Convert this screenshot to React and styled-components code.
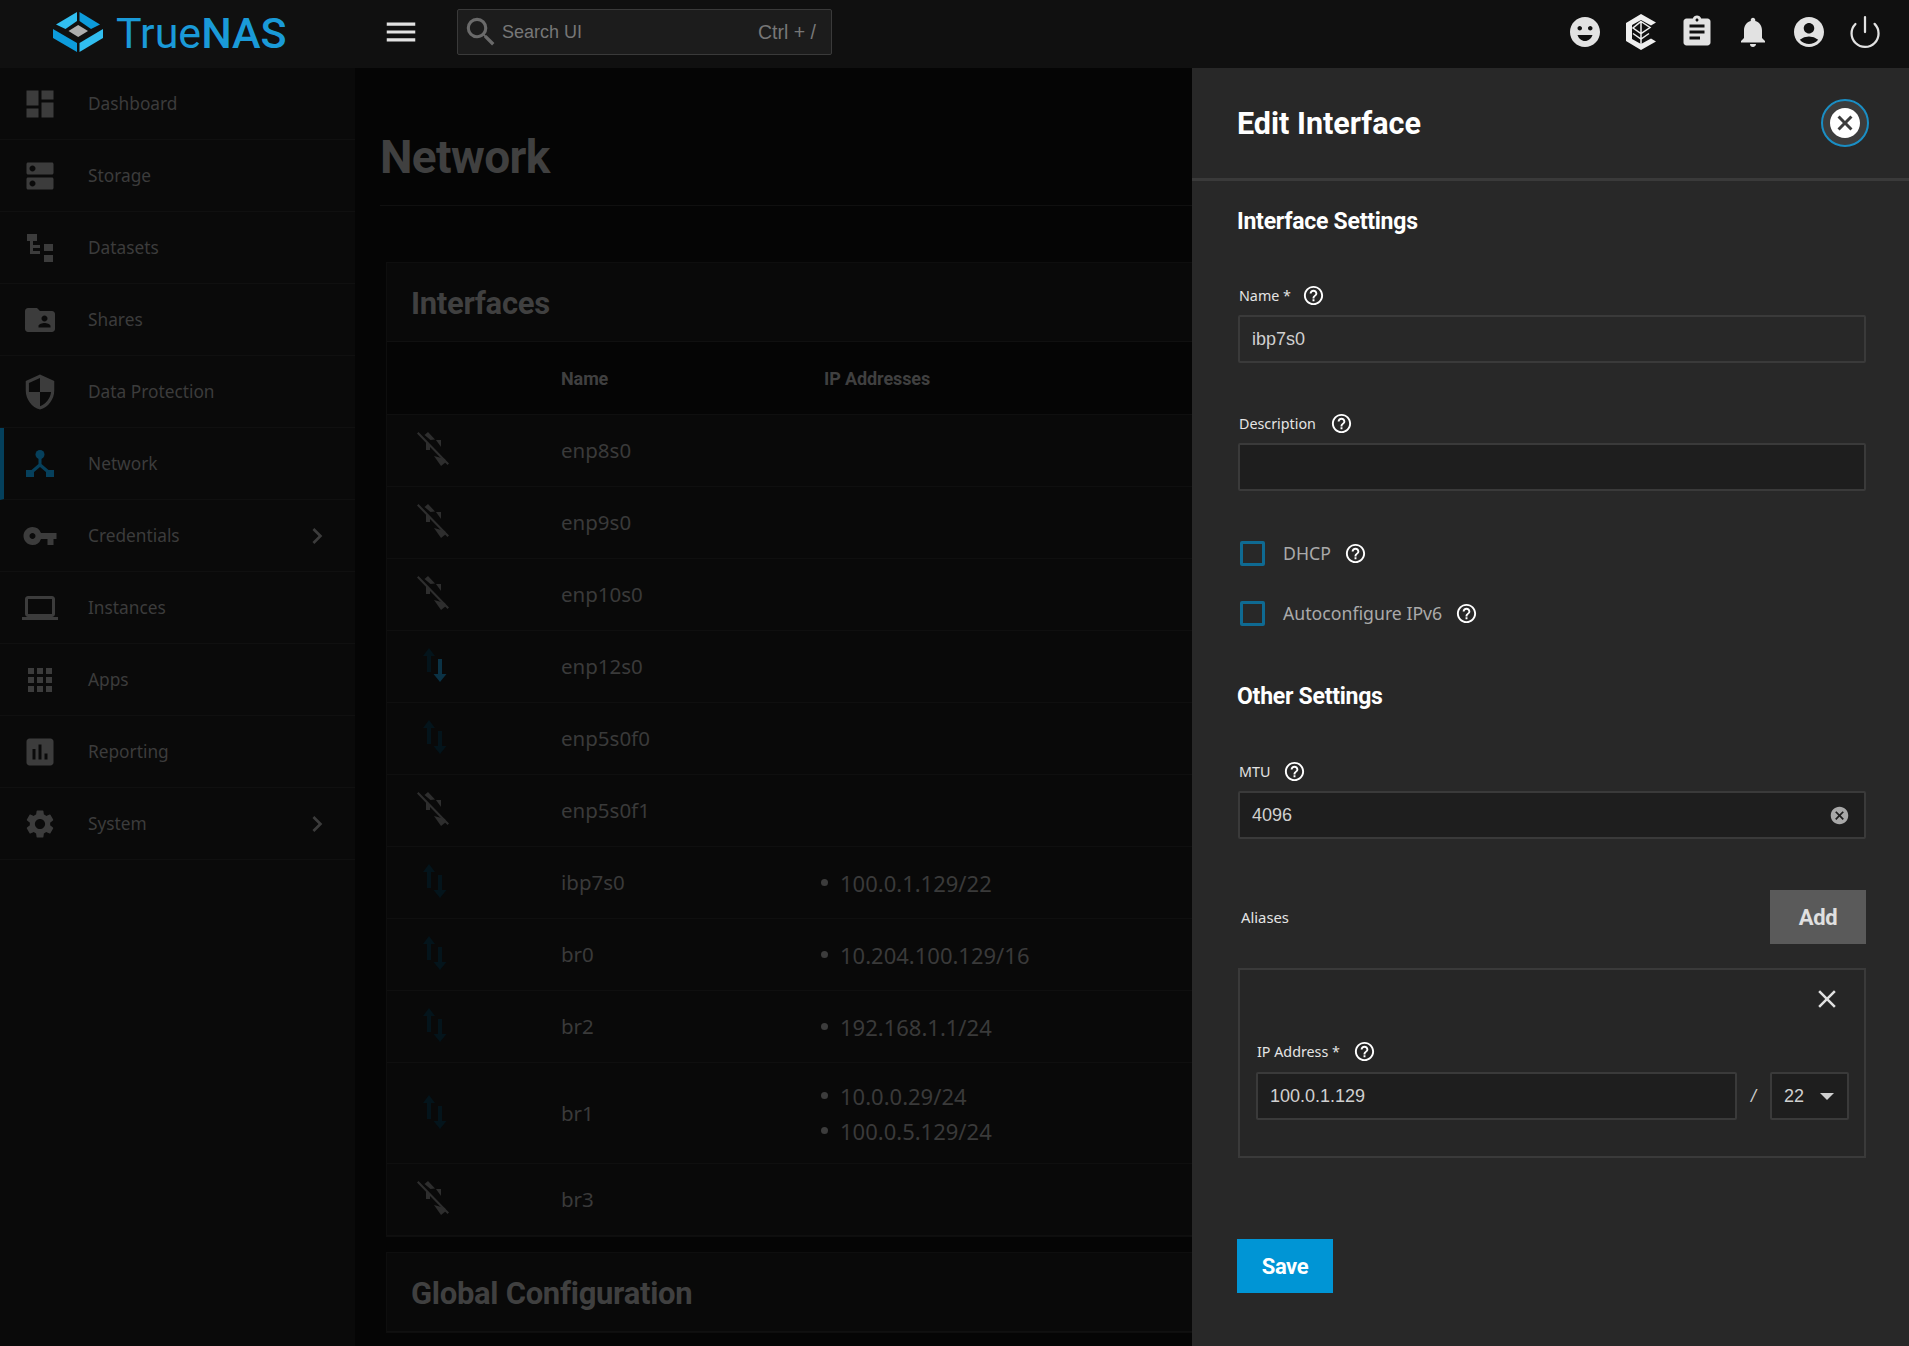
import React from 'react';
import styled, { createGlobalStyle } from 'styled-components';
import {
	MdDashboard,
	MdDns,
	MdFolderShared,
	MdSecurity,
	MdVpnKey,
	MdLaptop,
	MdApps,
	MdAssessment,
	MdSettings,
	MdChevronRight,
	MdMenu,
	MdSearch,
	MdEmojiEmotions,
	MdAssignment,
	MdNotifications,
	MdAccountCircle,
	MdCancel,
	MdClose,
	MdHelpOutline,
} from 'react-icons/md';
import { Power } from 'lucide-react';

const HEADING = '"Roboto", "Liberation Sans", sans-serif';
const BODY = '"Noto Sans", "Liberation Sans", sans-serif';
const FIELD = '"Liberation Sans", Arial, sans-serif';

const GlobalStyle = createGlobalStyle`
	html, body {
		margin: 0;
		padding: 0;
		height: 100%;
		background: #050505;
	}
	* {
		box-sizing: border-box;
	}
`;

const Page = styled.div`
	display: flex;
	flex-direction: column;
	width: 100vw;
	height: 100vh;
	overflow: hidden;
`;

const Topbar = styled.header`
	display: flex;
	align-items: center;
	flex: 0 0 68px;
	background: #101010;
	padding: 0 26px 4px 0;
`;

const LogoBox = styled.div`
	display: flex;
	align-items: center;
	width: 370px;
	padding-left: 53px;
	gap: 13px;
`;

const LogoText = styled.span`
	margin-top: 2px;
	font-family: ${HEADING};
	font-size: 43px;
	line-height: 1;
	color: #1a9ad8;
	& b {
		font-weight: 500;
	}
`;

const MenuButton = styled.div`
	display: flex;
	width: 64px;
	color: #e2e2e2;
	padding-left: 12px;
`;

const SearchBox = styled.div`
	display: flex;
	align-items: center;
	width: 375px;
	height: 46px;
	margin-left: 23px;
	padding: 0 15px 0 4px;
	background: #1c1c1c;
	border: 1px solid #3a3a3a;
	border-radius: 2px;
	font-family: ${FIELD};
	font-size: 18px;
	color: #777;
`;

const SearchText = styled.span`
	flex: 1;
	margin-left: 2px;
`;

const SearchHint = styled.span`
	font-size: 19.5px;
`;

const TopIcons = styled.div`
	display: flex;
	align-items: center;
	margin-left: auto;
	gap: 20px;
	color: #e2e2e2;
`;

const TopIcon = styled.div`
	display: flex;
	align-items: center;
	justify-content: center;
	width: 36px;
	height: 36px;
`;

const Body = styled.div`
	display: flex;
	flex: 1;
	min-height: 0;
`;

const Sidebar = styled.nav`
	flex: 0 0 355px;
	background: #0a0a0a;
`;

const NavItem = styled.div`
	display: flex;
	align-items: center;
	height: 72px;
	padding-left: ${(p) => (p.$active ? '21px' : '25px')};
	border-bottom: 1px solid #101010;
	border-left: ${(p) => (p.$active ? '4px solid #04405c' : 'none')};
	font-family: ${BODY};
	font-size: 17.3px;
	color: #3c3c3c;
`;

const NavIcon = styled.div`
	display: flex;
	justify-content: center;
	flex: 0 0 30px;
	min-width: 0;
	margin-right: 33px;
	color: ${(p) => (p.$active ? '#06405c' : '#3c3c3c')};
	& svg {
		flex: none;
	}
`;

const NavArrow = styled.div`
	display: flex;
	margin-left: auto;
	margin-right: 22px;
`;

const Main = styled.main`
	flex: 1;
	min-width: 0;
	overflow: hidden;
	padding-left: 25px;
`;

const PageTitle = styled.h1`
	display: flex;
	align-items: center;
	height: 138px;
	margin: 0 0 56px;
	padding-top: 40px;
	border-bottom: 1px solid #101010;
	font-family: ${HEADING};
	font-size: 46px;
	font-weight: 700;
	letter-spacing: -0.6px;
	color: #404040;
`;

const Card = styled.section`
	width: 1000px;
	margin-left: 6px;
	margin-bottom: 15px;
	background: #090909;
	border: 1px solid #0e0e0e;
`;

const CardTitle = styled.h2`
	display: flex;
	align-items: center;
	height: 79px;
	margin: 0;
	padding: 2px 0 0 24px;
	border-bottom: 1px solid #101010;
	font-family: ${HEADING};
	font-size: 31px;
	font-weight: 700;
	letter-spacing: -0.3px;
	color: #404040;
`;

const Row = styled.div`
	display: grid;
	grid-template-columns: 174px 263px 1fr;
	align-items: center;
	min-height: ${(p) => (p.$head ? '73px' : '72px')};
	border-bottom: 1px solid #0f0f0f;
	background: ${(p) => (p.$head ? '#050505' : 'transparent')};
	font-family: ${BODY};
	font-size: 20.5px;
	color: #3a3a3a;
`;

const HeadCell = styled.div`
	font-family: ${HEADING};
	font-size: 18px;
	font-weight: 700;
	letter-spacing: -0.1px;
	color: #404040;
`;

const NameCell = styled.div`
	padding-bottom: 1px;
`;

const StatusCell = styled.div`
	display: flex;
	padding: 0 0 3px 30px;
`;

const AddressList = styled.ul`
	margin: 0;
	padding: 15px 0 15px;
	list-style: none;
`;

const Address = styled.li`
	display: flex;
	align-items: center;
	height: 35px;
	gap: 12px;
	margin-left: -3px;
	font-size: 22px;
	&::before {
		content: '';
		width: 7px;
		height: 7px;
		border-radius: 50%;
		background: #3c3c3c;
	}
`;

const Panel = styled.aside`
	flex: 0 0 717px;
	padding: 0 43px 0 46px;
	background: #282828;
`;

const PanelHeader = styled.div`
	display: flex;
	align-items: center;
	justify-content: space-between;
	height: 113px;
	margin: 0 -43px 0 -46px;
	padding: 0 40px 0 45px;
	border-bottom: 3px solid #3a3a3a;
`;

const PanelTitle = styled.h2`
	margin: 0;
	font-family: ${HEADING};
	font-size: 30.5px;
	font-weight: 700;
	color: #fff;
`;

const CloseRing = styled.div`
	display: flex;
	align-items: center;
	justify-content: center;
	width: 48px;
	height: 48px;
	border: 2px solid #1a8ec4;
	border-radius: 50%;
	background: #3c3c3c;
	color: #fff;
	& svg {
		flex: none;
	}
`;

const SectionTitle = styled.h3`
	height: 30px;
	margin: ${(p) => p.$top} 0 0 -1px;
	font-family: ${HEADING};
	font-size: 23px;
	font-weight: 700;
	line-height: 30px;
	letter-spacing: -0.25px;
	color: #fff;
`;

const Field = styled.div`
	margin-top: ${(p) => p.$top || '48px'};
`;

const Label = styled.div`
	display: flex;
	align-items: center;
	height: 24px;
	margin-bottom: 8px;
	padding-left: 1px;
	gap: ${(p) => p.$gap || '13px'};
	font-family: ${BODY};
	font-size: 14.3px;
	color: #e4e4e4;
`;

const HelpIcon = styled(MdHelpOutline)`
	flex: none;
	font-size: 23px;
	color: #fff;
`;

const Input = styled.div`
	display: flex;
	align-items: center;
	flex: ${(p) => (p.$grow ? '1' : 'none')};
	height: 48px;
	padding: 0 14px 0 12px;
	background: ${(p) => (p.$disabled ? '#282828' : '#1e1e1e')};
	border: 2px solid #3a3a3a;
	border-radius: 2px;
	font-family: ${FIELD};
	font-size: 18px;
	color: #d0d0d0;
`;

const ClearIcon = styled(MdCancel)`
	margin-left: auto;
	font-size: 21px;
	color: #a8a8a8;
`;

const CheckRow = styled.div`
	display: flex;
	align-items: center;
	height: 30px;
	margin-top: ${(p) => p.$top};
	padding-left: 2px;
	font-family: ${BODY};
	font-size: 17.7px;
	color: #aaa;
`;

const CheckBox = styled.span`
	width: 25px;
	height: 25px;
	margin-right: 18px;
	border: 3px solid #0f6a92;
	border-radius: 2px;
`;

const CheckHelp = styled.span`
	display: flex;
	margin-left: 13px;
`;

const AliasRow = styled.div`
	display: flex;
	align-items: center;
	justify-content: space-between;
	margin-top: 51px;
	padding-left: 3px;
	font-family: ${BODY};
	font-size: 14.8px;
	color: #e4e4e4;
`;

const ActionButton = styled.div`
	display: flex;
	align-items: center;
	justify-content: center;
	width: 96px;
	height: 54px;
	padding-top: 1px;
	background: ${(p) => (p.$primary ? '#0095d5' : '#5a5a5a')};
	font-family: ${HEADING};
	font-size: 22px;
	font-weight: 700;
	letter-spacing: -0.4px;
	color: ${(p) => (p.$primary ? '#fff' : '#e0e0e0')};
`;

const AliasBox = styled.div`
	height: 190px;
	margin-top: 24px;
	padding: 14px 15px 0 16px;
	background: #262626;
	border: 2px solid #3a3a3a;
`;

const AliasRemove = styled.div`
	display: flex;
	justify-content: flex-end;
	margin-right: 7px;
	color: #e2e2e2;
`;

const AliasField = styled.div`
	margin-top: 25px;
`;

const AddressRow = styled.div`
	display: flex;
	align-items: center;
	margin-top: 9px;
`;

const Slash = styled.span`
	width: 33px;
	text-align: center;
	font-family: ${FIELD};
	font-size: 18px;
	font-style: italic;
	color: #ccc;
`;

const Select = styled(Input)`
	width: 79px;
	padding-right: 0;
`;

const Caret = styled.span`
	width: 0;
	height: 0;
	margin-left: 16px;
	border-left: 7px solid transparent;
	border-right: 7px solid transparent;
	border-top: 7px solid #d0d0d0;
`;

const SaveBar = styled.div`
	margin: 81px 0 0 -1px;
`;

const LogoMark = () => (
	<svg width="50" height="40" viewBox="0 0 50 40">
		<polygon points="3,12.5 24,0 24,9 12.5,17" fill="#31bef0" />
		<polygon points="47,12.5 26.5,0 26.5,9 38,17" fill="#0d9bdb" />
		<polygon points="0,17 24,31 24,40 0,26" fill="#0d9bdb" />
		<polygon points="50,17 26.5,31 26.5,40 50,26" fill="#31bef0" />
		<polygon points="25.2,13 35,19 25.2,25 15.5,19" fill="#aeaeae" />
	</svg>
);

const BoxLogo = () => (
	<svg width="32" height="36" viewBox="0 0 32 36">
		<path d="M16 0 L31 8.5 L26 11.5 L16 6 L7 11 L7 25 L16 30 L26 24.5 L31 27.5 L16 36 L1 27 L1 9 Z" fill="#efefef" />
		<path
			d="M16 7.5 L25 13.5 L16 19.5 L8 14 Z M16 7.5 V30 M8 19.5 L16 25 L24 19.5"
			fill="none"
			stroke="#efefef"
			strokeWidth="1.5"
		/>
	</svg>
);

const DatasetIcon = () => (
	<svg width="30" height="30" viewBox="0 0 30 30" fill="currentColor">
		<rect x="2" y="1" width="10" height="7" />
		<path d="M5 8h3v10h7v3H5z" />
		<path d="M8 12h7v3H8z" />
		<rect x="19" y="11" width="9" height="7" />
		<rect x="19" y="22" width="9" height="7" />
	</svg>
);

const NetworkIcon = () => (
	<svg width="30" height="30" viewBox="0 0 30 30" fill="currentColor">
		<circle cx="15" cy="5.5" r="4.5" />
		<path d="M13.5 8h3v7l7 6-2 2.4-6.5-5.4-6.5 5.4-2-2.4 7-6z" />
		<rect x="1" y="21" width="8" height="7" />
		<rect x="21" y="21" width="8" height="7" />
	</svg>
);

const LinkDownIcon = () => (
	<svg width="32" height="34" viewBox="0 0 32 34" fill="#2e2e2e">
		<path d="M0 1.5 L1.5 0 L32 31.5 L30.5 33 Z" />
		<path d="M7.5 3 L11 0 L18 7.5 L13.5 8 Z" />
		<path d="M9 10 L13 14 L13 18 L9 18 Z" />
		<path d="M19 8 L24 8 L24 15 Z" />
		<path d="M17 24 L28 27 L29 30 L24 34 Z" />
	</svg>
);

const LinkUpIcon = ({ upColor = '#04141b', downColor = '#04141b' }) => (
	<svg width="32" height="34" viewBox="0 0 32 34">
		<path d="M12 0 L18 8 L14 8 L14 24 L10 24 L10 8 L6 8 Z" fill={upColor} />
		<path d="M21 11 L25 11 L25 26 L29.5 26 L23 34 L16.5 26 L21 26 Z" fill={downColor} />
	</svg>
);

const navItems = [
	{ label: 'Dashboard', icon: <MdDashboard size={36} /> },
	{ label: 'Storage', icon: <MdDns size={36} /> },
	{ label: 'Datasets', icon: <DatasetIcon /> },
	{ label: 'Shares', icon: <MdFolderShared size={36} /> },
	{ label: 'Data Protection', icon: <MdSecurity size={38} /> },
	{ label: 'Network', icon: <NetworkIcon />, active: true },
	{ label: 'Credentials', icon: <MdVpnKey size={36} />, more: true },
	{ label: 'Instances', icon: <MdLaptop size={36} /> },
	{ label: 'Apps', icon: <MdApps size={36} /> },
	{ label: 'Reporting', icon: <MdAssessment size={36} /> },
	{ label: 'System', icon: <MdSettings size={34} />, more: true },
];

const interfaces = [
	{ name: 'enp8s0' },
	{ name: 'enp9s0' },
	{ name: 'enp10s0' },
	{ name: 'enp12s0', up: true, downColor: '#0b3245' },
	{ name: 'enp5s0f0', up: true },
	{ name: 'enp5s0f1' },
	{ name: 'ibp7s0', up: true, addresses: ['100.0.1.129/22'] },
	{ name: 'br0', up: true, addresses: ['10.204.100.129/16'] },
	{ name: 'br2', up: true, addresses: ['192.168.1.1/24'] },
	{ name: 'br1', up: true, addresses: ['10.0.0.29/24', '100.0.5.129/24'] },
	{ name: 'br3' },
];

export default function App() {
	return (
		<Page>
			<GlobalStyle />
			<Topbar>
				<LogoBox>
					<LogoMark />
					<LogoText>
						True<b>NAS</b>
					</LogoText>
				</LogoBox>
				<MenuButton>
					<MdMenu size={38} />
				</MenuButton>
				<SearchBox>
					<MdSearch size={38} color="#6a6a6a" />
					<SearchText>Search UI</SearchText>
					<SearchHint>Ctrl + /</SearchHint>
				</SearchBox>
				<TopIcons>
					<TopIcon>
						<MdEmojiEmotions size={36} />
					</TopIcon>
					<TopIcon>
						<BoxLogo />
					</TopIcon>
					<TopIcon>
						<MdAssignment size={36} />
					</TopIcon>
					<TopIcon>
						<MdNotifications size={36} />
					</TopIcon>
					<TopIcon>
						<MdAccountCircle size={36} />
					</TopIcon>
					<TopIcon>
						<Power size={36} strokeWidth={1.5} />
					</TopIcon>
				</TopIcons>
			</Topbar>
			<Body>
				<Sidebar>
					{navItems.map((item) => (
						<NavItem key={item.label} $active={item.active}>
							<NavIcon $active={item.active}>{item.icon}</NavIcon>
							{item.label}
							{item.more && (
								<NavArrow>
									<MdChevronRight size={32} />
								</NavArrow>
							)}
						</NavItem>
					))}
				</Sidebar>
				<Main>
					<PageTitle>Network</PageTitle>
					<Card>
						<CardTitle>Interfaces</CardTitle>
						<Row $head>
							<div />
							<HeadCell>Name</HeadCell>
							<HeadCell>IP Addresses</HeadCell>
						</Row>
						{interfaces.map((item) => (
							<Row key={item.name}>
								<StatusCell>
									{item.up ? <LinkUpIcon downColor={item.downColor} /> : <LinkDownIcon />}
								</StatusCell>
								<NameCell>{item.name}</NameCell>
								{item.addresses ? (
									<AddressList>
										{item.addresses.map((address) => (
											<Address key={address}>{address}</Address>
										))}
									</AddressList>
								) : (
									<div />
								)}
							</Row>
						))}
					</Card>
					<Card>
						<CardTitle>Global Configuration</CardTitle>
					</Card>
				</Main>
				<Panel>
					<PanelHeader>
						<PanelTitle>Edit Interface</PanelTitle>
						<CloseRing>
							<MdCancel size={36} />
						</CloseRing>
					</PanelHeader>
					<SectionTitle $top="26px">Interface Settings</SectionTitle>
					<Field $top="46px">
						<Label $gap="11px">
							Name *<HelpIcon />
						</Label>
						<Input $disabled>ibp7s0</Input>
					</Field>
					<Field>
						<Label $gap="14px">
							Description
							<HelpIcon />
						</Label>
						<Input />
					</Field>
					<CheckRow $top="47px">
						<CheckBox />
						DHCP
						<CheckHelp>
							<HelpIcon />
						</CheckHelp>
					</CheckRow>
					<CheckRow $top="30px">
						<CheckBox />
						Autoconfigure IPv6
						<CheckHelp>
							<HelpIcon />
						</CheckHelp>
					</CheckRow>
					<SectionTitle $top="54px">Other Settings</SectionTitle>
					<Field $top="47px">
						<Label>
							MTU
							<HelpIcon />
						</Label>
						<Input>
							4096
							<ClearIcon />
						</Input>
					</Field>
					<AliasRow>
						Aliases
						<ActionButton>Add</ActionButton>
					</AliasRow>
					<AliasBox>
						<AliasRemove>
							<MdClose size={30} />
						</AliasRemove>
						<AliasField>
							<Label>
								IP Address *
								<HelpIcon />
							</Label>
							<AddressRow>
								<Input $grow>100.0.1.129</Input>
								<Slash>/</Slash>
								<Select>
									22
									<Caret />
								</Select>
							</AddressRow>
						</AliasField>
					</AliasBox>
					<SaveBar>
						<ActionButton $primary>Save</ActionButton>
					</SaveBar>
				</Panel>
			</Body>
		</Page>
	);
}
